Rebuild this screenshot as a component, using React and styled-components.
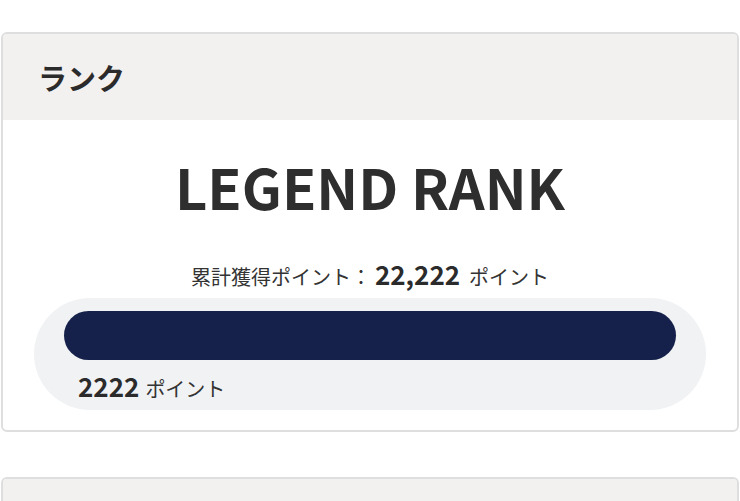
import React from "react";
import styled, { createGlobalStyle } from "styled-components";

const GlobalStyle = createGlobalStyle`
  body {
    margin: 0;
    background: #fff;
    font-family: "Noto Sans CJK JP", "Noto Sans", sans-serif;
    color: #2b2b2b;
  }
`;

const Page = styled.div`
  padding: 32px 1px 0;
  display: flex;
  flex-direction: column;
  gap: 45px;
`;

const Card = styled.section`
  border: 2px solid #dedede;
  border-radius: 6px;
  overflow: hidden;
  background: #fff;
`;

const Header = styled.div`
  background: #f2f1f0;
  height: 86px;
  display: flex;
  align-items: center;
  padding: 0 35px;
  box-sizing: border-box;
`;

const Title = styled.h2`
  margin: 0;
  font-size: 29px;
  font-weight: 700;
  color: #2b2b2b;
`;

const Body = styled.div`
  display: flex;
  flex-direction: column;
  align-items: center;
  padding: 28px 31px 20px;
`;

const RankName = styled.h1`
  margin: 0;
  font-size: 56px;
  font-weight: 700;
  line-height: 76px;
  color: #2e2e2e;
`;

const Total = styled.p`
  margin: 33px 0 0;
  font-size: 20px;
  line-height: 34px;
  color: #333;
  display: flex;
  align-items: baseline;
`;

const Strong = styled.span`
  font-size: ${(p) => p.size}px;
  font-weight: 700;
  margin: 0 ${(p) => p.gap}px 0 ${(p) => p.left || 0}px;
  color: #2b2b2b;
`;

const Progress = styled.div`
  align-self: stretch;
  margin-top: 4px;
  background: #f0f2f4;
  border-radius: 56px;
  padding: 13px 30px 10px;
  height: 112px;
  box-sizing: border-box;
`;

const Bar = styled.div`
  height: 49px;
  border-radius: 25px;
  background: #15214a;
`;

const Current = styled.div`
  margin-top: 8px;
  padding-left: 14px;
  font-size: 20px;
  line-height: 36px;
  display: flex;
  align-items: baseline;
  color: #333;
`;

const EmptyCard = styled(Card)`
  border-bottom: none;
  border-radius: 6px 6px 0 0;
`;

export default function App() {
  return (
    <>
      <GlobalStyle />
      <Page>
        <Card>
          <Header>
            <Title>ランク</Title>
          </Header>
          <Body>
            <RankName>LEGEND RANK</RankName>
            <Total>
              累計獲得ポイント：
              <Strong size={26} gap={9} left={4}>
                22,222
              </Strong>
              ポイント
            </Total>
            <Progress>
              <Bar />
              <Current>
                <Strong size={26} gap={6}>
                  2222
                </Strong>
                ポイント
              </Current>
            </Progress>
          </Body>
        </Card>
        <EmptyCard>
          <Header />
        </EmptyCard>
      </Page>
    </>
  );
}
